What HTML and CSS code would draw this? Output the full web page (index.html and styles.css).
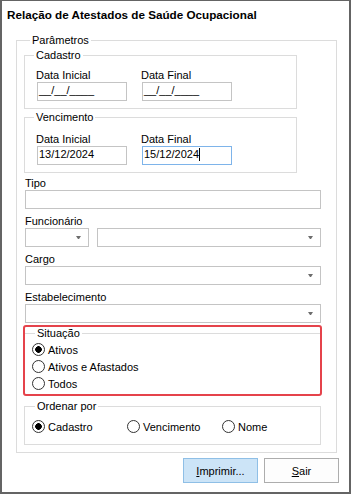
FILE: index.html
```html
<html>
  <head>
<link rel="stylesheet" href="styles.css">
  </head>
  <body>
    <div class="window">
      <h1 class="title">Relação de Atestados de Saúde Ocupacional</h1>

      <fieldset class="group params">
        <legend>Parâmetros</legend>

        <fieldset class="group sub">
          <legend>Cadastro</legend>
          <div class="dates">
            <div class="date-col">
              <span class="cap">Data Inicial</span>
              <div class="edit date">__/__/____</div>
            </div>
            <div class="date-col">
              <span class="cap">Data Final</span>
              <div class="edit date">__/__/____</div>
            </div>
          </div>
        </fieldset>

        <fieldset class="group sub venc">
          <legend>Vencimento</legend>
          <div class="dates">
            <div class="date-col">
              <span class="cap">Data Inicial</span>
              <div class="edit date">13/12/2024</div>
            </div>
            <div class="date-col">
              <span class="cap">Data Final</span>
              <div class="edit date focused">15/12/2024<span class="caret"></span></div>
            </div>
          </div>
        </fieldset>

        <div class="row first">
          <span class="cap">Tipo</span>
          <div class="edit"></div>
        </div>

        <div class="row">
          <span class="cap">Funcionário</span>
          <div class="combo-pair">
            <div class="combo short"></div>
            <div class="combo wide"></div>
          </div>
        </div>

        <div class="row">
          <span class="cap">Cargo</span>
          <div class="combo"></div>
        </div>

        <div class="row">
          <span class="cap">Estabelecimento</span>
          <div class="combo"></div>
        </div>

        <div class="highlight">
          <fieldset class="group situacao">
            <legend>Situação</legend>
            <label class="radio-item"><input type="radio" name="sit" checked> Ativos</label>
            <label class="radio-item"><input type="radio" name="sit"> Ativos e Afastados</label>
            <label class="radio-item"><input type="radio" name="sit"> Todos</label>
          </fieldset>
        </div>

        <fieldset class="group ordem">
          <legend>Ordenar por</legend>
          <div class="radio-row">
            <label class="radio-item"><input type="radio" name="ord" checked> Cadastro</label>
            <label class="radio-item"><input type="radio" name="ord"> Vencimento</label>
            <label class="radio-item"><input type="radio" name="ord"> Nome</label>
          </div>
        </fieldset>
      </fieldset>

      <div class="buttons">
        <button class="btn default"><u>I</u>mprimir...</button>
        <button class="btn"><u>S</u>air</button>
      </div>
    </div>
  </body>
</html>
```

FILE: styles.css
```css
body{
  margin: 0;
  font-family: "Liberation Sans", Arial, sans-serif;
  font-size: 11px;
  color: #000;
  background: #fff;
}
.window{
  box-sizing: border-box;
  width: 351px;
  height: 494px;
  border: 2px solid #646464;
  border-top-width: 1px;
  padding-top: 7px;
  background: #fff;
}
.title{
  margin: 0 0 0 5px;
  font-size: 11.7px;
  font-weight: bold;
  line-height: 14px;
}
.group{
  margin: 0;
  padding: 0;
  min-width: 0;
  border: 1px solid #dcdcdc;
  box-sizing: border-box;
}
.group > legend{
  padding: 0 2px;
  margin-left: 9px;
  line-height: 13px;
}
.cap{
  display: block;
  line-height: 13px;
}

/* Parâmetros */
.params{
  margin: 12px 0 0 14px;
  width: 321px;
  padding-bottom: 7px;
}
.params > legend{
  margin-left: 13px;
}
.sub{
  margin: 2px 0 0 7px;
  width: 273px;
  padding: 7px 0 7px 11px;
}
.sub > legend{
  margin-left: -2px;
}
.sub.venc{
  padding-top: 9px;
}
.dates{
  display: flex;
}
.date-col{
  width: 105px;
}

/* campos */
.edit{
  box-sizing: border-box;
  height: 19px;
  border: 1px solid #c4c4c4;
  background: #fff;
  padding-left: 1px;
  line-height: 15px;
  white-space: nowrap;
}
.edit.date{
  width: 90px;
  margin-left: 1px;
}
.edit.focused{
  border-color: #7eb4ea;
}
.caret{
  display: inline-block;
  width: 1px;
  height: 13px;
  background: #000;
  vertical-align: -3px;
}
.row{
  margin: 6px 15px 0 8px;
}
.row.first{
  margin-top: 4px;
}
.combo{
  box-sizing: border-box;
  height: 19px;
  border: 1px solid #c4c4c4;
  background: #fff;
  display: flex;
  align-items: center;
  justify-content: flex-end;
  padding-right: 7px;
}
.combo::after{
  content: "";
  width: 1px;
  height: 0;
  border-left: 2px solid transparent;
  border-right: 2px solid transparent;
  border-top: 3px solid #6d6d6d;
}
.combo-pair{
  display: flex;
  gap: 8px;
}
.combo.short{
  width: 64px;
}
.combo.wide{
  flex: 1;
}

/* Situação */
.highlight{
  margin: 2px 14px 0 6px;
  border: 2px solid #e5434b;
  border-radius: 3px;
}
.situacao{
  border-width: 1px 0 0 0;
  padding: 1px 0 2px 7px;
}
.situacao > legend{
  margin-left: 3px;
}
.radio-item{
  display: flex;
  align-items: center;
  gap: 3px;
  height: 17px;
}
.radio-item input{
  appearance: none;
  -webkit-appearance: none;
  box-sizing: border-box;
  width: 13px;
  height: 13px;
  margin: 0;
  border: 1px solid #333;
  border-radius: 50%;
  background: #fff;
}
.radio-item input:checked{
  background: radial-gradient(circle, #000 0 3px, #fff 3.6px);
}

/* Ordenar por */
.ordem{
  margin: 4px 15px 0 7px;
  padding: 5px 0 9px 7px;
}
.ordem > legend{
  margin-left: 3px;
}
.radio-row{
  display: flex;
}
.radio-row .radio-item{
  width: 95px;
}

/* botões */
.buttons{
  display: flex;
  justify-content: flex-end;
  gap: 6px;
  margin-top: 5px;
  padding-right: 10px;
}
.btn{
  box-sizing: border-box;
  width: 75px;
  height: 25px;
  padding: 0;
  font-family: "Liberation Sans", Arial, sans-serif;
  font-size: 11px;
  color: #000;
  border: 1px solid #adadad;
  background: #fdfdfd;
}
.btn.default{
  background: #cce4f7;
  border-color: #8fbfe6;
}
```
